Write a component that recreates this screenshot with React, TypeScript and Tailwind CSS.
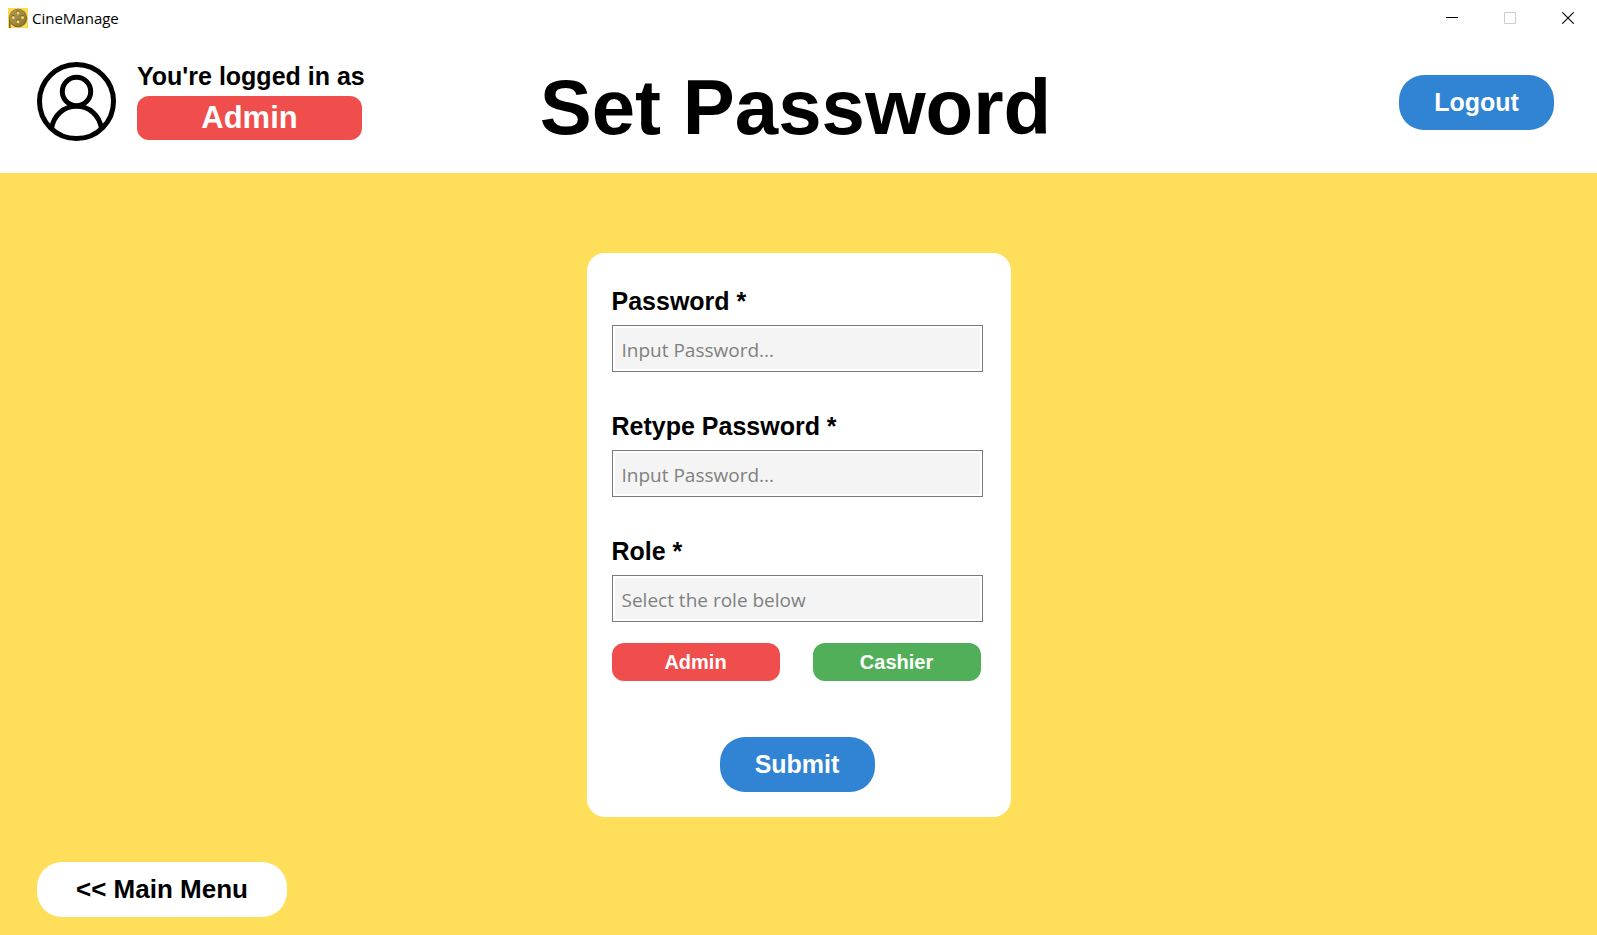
import { useState } from "react";
import type { ReactNode } from "react";

function FilmReelIcon() {
  return (
    <svg viewBox="0 0 20 20" className="size-5" aria-hidden="true">
      <defs>
        <linearGradient id="reel" x1="0" y1="0" x2="1" y2="1">
          <stop offset="0" stopColor="#b09a50" />
          <stop offset="0.5" stopColor="#a08c46" />
          <stop offset="1" stopColor="#8a7434" />
        </linearGradient>
      </defs>
      <rect width="20" height="20" fill="#fdd94f" />
      <path d="M1 9 V20 H2.6 V15 Z" fill="#7d672a" />
      <circle cx="10" cy="10" r="9.2" fill="#806a2c" />
      <circle cx="9.8" cy="9.6" r="8.4" fill="url(#reel)" />
      <g fill="#7a6528">
        <circle cx="10" cy="4.4" r="2" />
        <circle cx="5.3" cy="8.9" r="2" />
        <circle cx="14.5" cy="8.9" r="2" />
        <circle cx="10" cy="13.3" r="2" />
      </g>
      <g fill="#f8da6c">
        <circle cx="10" cy="4.9" r="1.5" />
        <circle cx="5.3" cy="9.4" r="1.5" />
        <circle cx="14.5" cy="9.4" r="1.5" />
        <circle cx="10" cy="13.8" r="1.5" />
      </g>
    </svg>
  );
}

function UserIcon() {
  return (
    <svg
      viewBox="0 0 79 79"
      className="size-[79px] shrink-0"
      fill="none"
      stroke="#000"
      strokeWidth="5"
      aria-hidden="true"
    >
      <circle cx="39.5" cy="39.5" r="37" />
      <circle cx="39.5" cy="29.5" r="14.2" />
      <path d="M14.6 66.5 C16.5 53 27 44.2 39.5 44.2 C52 44.2 62.5 53 64.4 66.5" />
    </svg>
  );
}

function WindowButton({ label, disabled, children }: { label: string; disabled?: boolean; children: ReactNode }) {
  return (
    <button type="button" aria-label={label} disabled={disabled} className="flex h-9 w-[58px] items-center justify-center">
      <svg viewBox="0 0 12 12" className="size-3" fill="none" stroke="currentColor" aria-hidden="true">
        {children}
      </svg>
    </button>
  );
}

function TitleBar() {
  return (
    <div className="flex h-9 items-center justify-between pl-2">
      <div className="flex items-center gap-1 font-['Open_Sans','Noto_Sans',sans-serif] text-[15px]">
        <FilmReelIcon />
        <span>CineManage</span>
      </div>
      <div className="flex text-black">
        <WindowButton label="Minimize">
          <path d="M0 5.5H12" />
        </WindowButton>
        <WindowButton label="Maximize" disabled>
          <path d="M0.5 0.5H11.5V11.5H0.5Z" stroke="#cccccc" />
        </WindowButton>
        <WindowButton label="Close">
          <path d="M0.3 0.3L11.7 11.7M11.7 0.3L0.3 11.7" strokeWidth="1.1" />
        </WindowButton>
      </div>
    </div>
  );
}

type FieldProps = {
  id: string;
  label: string;
  placeholder: string;
  type: string;
  value: string;
  readOnly?: boolean;
  onChange?: (value: string) => void;
};

function Field({ id, label, placeholder, type, value, readOnly, onChange }: FieldProps) {
  return (
    <div className="flex flex-col gap-2">
      <label htmlFor={id} className="text-[25px] leading-8 font-bold">
        {label}
      </label>
      <input
        id={id}
        type={type}
        value={value}
        readOnly={readOnly}
        placeholder={placeholder}
        onChange={(e) => onChange?.(e.target.value)}
        className="h-[47px] w-full border border-[#7a7a7a] bg-[#f4f4f4] px-[9px] pt-0.5 font-['Open_Sans','Noto_Sans',sans-serif] text-[19px] shadow-[inset_0_0_0_2px_#ffffff] outline-none placeholder:text-[#808080]"
      />
    </div>
  );
}

export default function App() {
  const [password, setPassword] = useState("");
  const [retyped, setRetyped] = useState("");
  const [role, setRole] = useState("");

  return (
    <div className="flex min-h-screen flex-col bg-[#ffde59] font-['Liberation_Sans',Arial,sans-serif] text-black">
      <header className="bg-white">
        <TitleBar />
        <div className="grid h-[137px] grid-cols-[1fr_auto_1fr] items-center pr-[43px] pb-1 pl-[37px]">
          <div className="flex items-center gap-[21px] pb-0.5">
            <UserIcon />
            <div className="flex w-[228px] flex-col gap-[7px]">
              <p className="text-[25px] leading-[26px] font-bold whitespace-nowrap">You're logged in as</p>
              <span className="flex h-11 w-[225px] items-center justify-center rounded-xl bg-[#f04e4d] text-[31px] font-bold text-white">
                Admin
              </span>
            </div>
          </div>
          <h1 className="pt-2 text-[78px] leading-none font-bold whitespace-nowrap">Set Password</h1>
          <button
            type="button"
            className="h-[55px] w-[155px] justify-self-end rounded-[25px] bg-[#3084d3] text-[25px] font-bold text-white"
          >
            Logout
          </button>
        </div>
      </header>

      <main className="flex flex-1 flex-col px-[37px] pt-20 pb-[18px]">
        <form
          onSubmit={(e) => e.preventDefault()}
          className="flex w-full max-w-[424px] flex-col self-center rounded-[18px] bg-white pt-8 pr-7 pb-[25px] pl-[25px]"
        >
          <div className="flex flex-col gap-[38px]">
            <Field
              id="password"
              label="Password *"
              placeholder="Input Password..."
              type="password"
              value={password}
              onChange={setPassword}
            />
            <Field
              id="retype"
              label="Retype Password *"
              placeholder="Input Password..."
              type="password"
              value={retyped}
              onChange={setRetyped}
            />
            <Field id="role" label="Role *" placeholder="Select the role below" type="text" value={role} readOnly />
          </div>
          <div className="mt-[21px] grid grid-cols-2 gap-[33px] pr-0.5">
            <button
              type="button"
              onClick={() => setRole("Admin")}
              className="h-[38px] rounded-xl bg-[#f04e4d] text-xl font-bold text-white"
            >
              Admin
            </button>
            <button
              type="button"
              onClick={() => setRole("Cashier")}
              className="h-[38px] rounded-xl bg-[#50af58] text-xl font-bold text-white"
            >
              Cashier
            </button>
          </div>
          <button
            type="submit"
            className="mt-14 h-[55px] w-[155px] self-center rounded-[25px] bg-[#3084d3] text-[25px] font-bold text-white"
          >
            Submit
          </button>
        </form>
        <div className="mt-auto pt-6">
          <button type="button" className="h-[55px] w-[250px] rounded-[25px] bg-white text-[26px] font-bold">
            &lt;&lt; Main Menu
          </button>
        </div>
      </main>
    </div>
  );
}
